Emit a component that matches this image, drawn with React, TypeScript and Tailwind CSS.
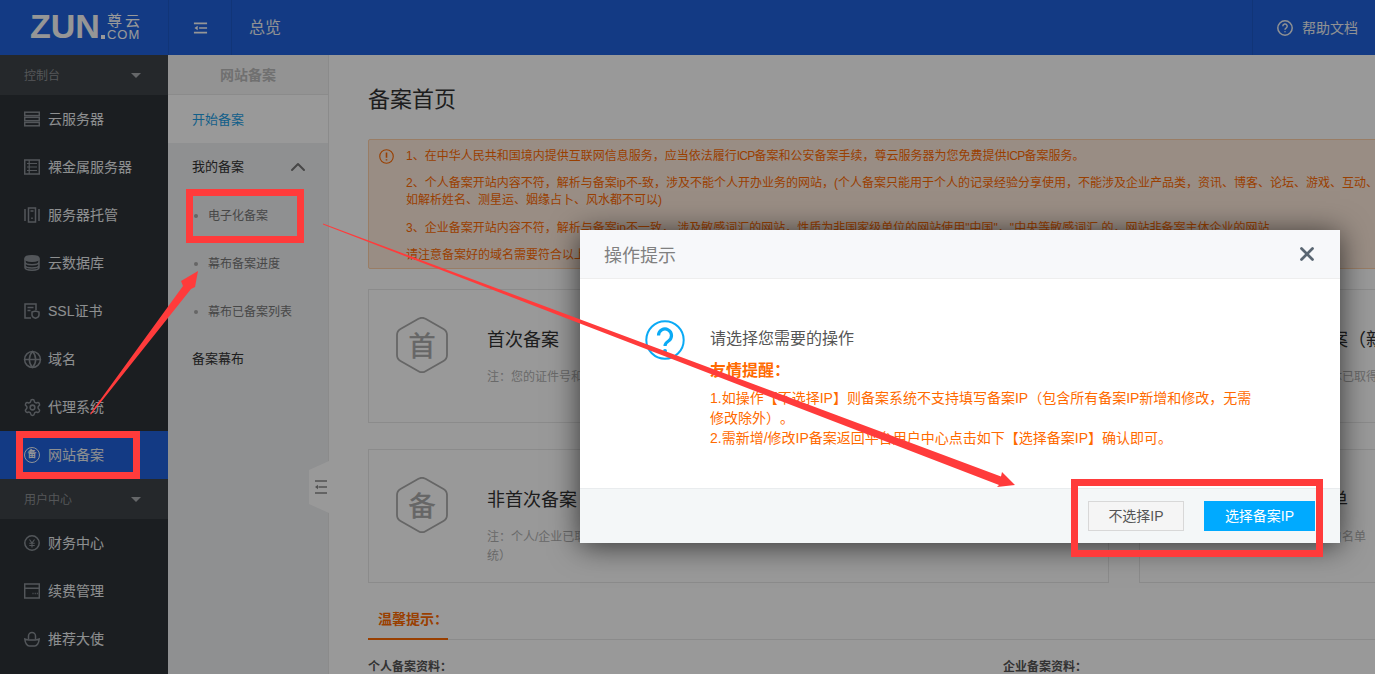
import React from "react";
import { Globe, Settings, X, ChevronUp } from "lucide-react";

const IC = "w-4 h-4 shrink-0 text-[#8a9096]";
const ICL = "w-[19px] h-[19px] -mx-[1.5px] shrink-0 text-[#8a9096]";

function Svg({ children }: { children: React.ReactNode }) {
  return (
    <svg viewBox="0 0 16 16" className={IC} fill="none" stroke="currentColor" strokeWidth="1.5">
      {children}
    </svg>
  );
}

const icons: Record<string, React.ReactNode> = {
  server: (
    <Svg>
      <rect x="0.7" y="1.2" width="14.6" height="3.4" />
      <rect x="0.7" y="6.3" width="14.6" height="3.4" />
      <rect x="0.7" y="11.4" width="14.6" height="3.4" />
    </Svg>
  ),
  metal: (
    <Svg>
      <rect x="0.7" y="1" width="14.6" height="14" />
      <path d="M3 4.5h10M3 8h10M3 11.5h10M5.2 1v14" strokeWidth="1.2" />
    </Svg>
  ),
  host: (
    <Svg>
      <rect x="4.5" y="1" width="7" height="14" />
      <path d="M1 2v12M15 2v12M6.5 4h3M8 10.5v1.5" />
    </Svg>
  ),
  db: (
    <Svg>
      <ellipse cx="8" cy="3.5" rx="7" ry="2.7" fill="currentColor" />
      <path d="M1 7c0 1.6 3 2.7 7 2.7s7-1.1 7-2.7M1 10.2c0 1.6 3 2.7 7 2.7s7-1.1 7-2.7M1 3.5v9c0 1.600 3 2.700 7 2.700s7-1.100 7-2.700v-9" />
    </Svg>
  ),
  ssl: (
    <Svg>
      <path d="M7 15H1V1h11v6" />
      <path d="M3.500 4.500h6M3.500 7.500h3" />
      <path d="M8 9l3.500-1 3.500 1v3c0 1.600-1.500 2.700-3.500 3.300C9.500 14.700 8 13.600 8 12z" />
    </Svg>
  ),
  yuan: (
    <Svg>
      <circle cx="8" cy="8" r="7.200" />
      <path d="M5.500 4.500L8 8l2.500-3.500M5.300 8.300h5.400M5.300 10.500h5.400M8 8v4.500" strokeWidth="1.100" />
    </Svg>
  ),
  renew: (
    <Svg>
      <rect x="0.700" y="1" width="14.600" height="14" />
      <path d="M1 5.300h14M8.500 10.500h1M10.700 10.500h1M12.800 10.500h1" />
    </Svg>
  ),
  ingot: (
    <Svg>
      <path d="M0.800 8c2 .7 3 1 4 1h6.400c1 0 2-.3 4-1-.3 4-2.300 7-4.500 7H5.300C3.100 15 1.100 12 .8 8z" />
      <path d="M4.500 8.500V5a3.500 3.500 0 0 1 7 0v3.500" />
    </Svg>
  ),
};

function Item({ icon, label, active }: { icon: React.ReactNode; label: string; active?: boolean }) {
  return (
    <div className={`h-12 flex items-center pl-6 gap-2 text-sm text-[#eceef0] ${active ? "bg-[#2062dc]" : ""}`}>
      {icon}
      <span>{label}</span>
    </div>
  );
}

function Group({ label }: { label: string }) {
  return (
    <div className="h-10 flex items-center justify-between pl-6 pr-[27px] bg-[#3e4348] text-xs text-[#8d9093]">
      <span className="pt-[2px]">{label}</span>
      <span className="w-0 h-0 border-x-[5px] border-x-transparent border-t-[5px] border-t-[#a8acb0]" />
    </div>
  );
}

function Hex({ ch }: { ch: string }) {
  return (
    <svg viewBox="0 0 52 56" className="w-[52px] h-[56px] shrink-0">
      <path
        d="M22.500 1.800a7 7 0 0 1 7 0L47.500 12a7 7 0 0 1 3.500 6v20a7 7 0 0 1-3.500 6L29.500 54.200a7 7 0 0 1-7 0L4.500 44A7 7 0 0 1 1 38V18a7 7 0 0 1 3.500-6z"
        fill="none"
        stroke="#aaaaaa"
        strokeWidth="1.800"
      />
      <text x="26" y="39" textAnchor="middle" fontSize="27" fill="#aaaaaa" stroke="#aaaaaa" strokeWidth="0.5">
        {ch}
      </text>
    </svg>
  );
}

function Card({ ch, title, note }: { ch: string; title: string; note: React.ReactNode }) {
  return (
    <div className="w-[741px] h-[134px] shrink-0 border border-[#e8e8e8] pl-[27px] pt-[27px] flex">
      <Hex ch={ch} />
      <div className="ml-[39px] pt-[10px] w-[600px]">
        <div className="text-lg leading-[26px] text-[#333333]">{title}</div>
        <div className="mt-[15px] text-xs leading-[19px] text-[#b0b0b0]">{note}</div>
      </div>
    </div>
  );
}

export default function App() {
  return (
    <div className="relative w-[1375px] h-[674px] overflow-hidden bg-white flex flex-col [text-spacing-trim:space-all] [font-family:'Liberation_Sans','Noto_Sans_CJK_SC',sans-serif]">
      {/* header */}
      <header className="h-[55px] shrink-0 bg-[#2062dc] flex items-stretch text-[#f0f2f5]">
        <div className="w-[169px] border-r border-[#1d59c8] flex items-center pl-[30px] text-white">
          <span className="text-[34px] leading-none font-bold mb-[4px] text-[#fbfbfb]">ZUN</span>
          <span className="ml-[1px] mt-[19px] w-[4px] h-[4px] bg-white" />
          <span className="ml-[2px] flex flex-col leading-none -mt-[1px]">
            <span className="text-[15px] leading-[16px] tracking-[3px] whitespace-nowrap">尊云</span>
            <span className="text-[13px] leading-[12px] tracking-[1px]">COM</span>
          </span>
        </div>
        <div className="w-[63px] border-r border-[#1d59c8] flex items-center justify-center">
          <svg viewBox="0 0 16 14" className="w-[15px] h-[14px]" fill="none" stroke="#fafafa" strokeWidth="1.800">
            <path d="M1 2h14M6.500 7H15M1 12h14" />
            <path d="M5 4.500L1.500 7 5 9.500z" fill="#fafafa" stroke="none" />
          </svg>
        </div>
        <div className="flex-1 flex items-center pl-[17px] text-base">总览</div>
        <div className="w-[123px] border-l border-[#1d59c8] flex items-center pl-6 gap-[9px] text-sm">
          <svg viewBox="0 0 16 16" className="w-4 h-4" fill="none" stroke="currentColor" strokeWidth="1.500">
            <circle cx="8" cy="8" r="7.200" />
            <path d="M5.800 6.200a2.200 2.200 0 1 1 3.300 1.900c-.7.400-1.100.8-1.100 1.600M8 11.200v1.100" />
          </svg>
          <span>帮助文档</span>
        </div>
      </header>

      <div className="flex-1 flex min-h-0">
        {/* sidebar */}
        <aside className="w-[168px] shrink-0 bg-[#2d3238]">
          <Group label="控制台" />
          <Item icon={icons.server} label="云服务器" />
          <Item icon={icons.metal} label="裸金属服务器" />
          <Item icon={icons.host} label="服务器托管" />
          <Item icon={icons.db} label="云数据库" />
          <Item icon={icons.ssl} label="SSL证书" />
          <Item icon={<Globe className={ICL} strokeWidth={1.9} />} label="域名" />
          <Item icon={<Settings className={ICL} strokeWidth={1.9} />} label="代理系统" />
          <Item
            active
            icon={
              <span className="w-4 h-4 shrink-0 rounded-full border-[1.5px] border-[#f0f3fa] text-[#f5f7fc] font-bold text-[9px] leading-[13px] text-center">
                备
              </span>
            }
            label="网站备案"
          />
          <Group label="用户中心" />
          <Item icon={icons.yuan} label="财务中心" />
          <Item icon={icons.renew} label="续费管理" />
          <Item icon={icons.ingot} label="推荐大使" />
        </aside>

        {/* sub nav */}
        <nav className="relative w-[161px] shrink-0 border-r border-[#e8e8e8] flex flex-col">
          <div className="h-10 shrink-0 border-b border-[#e8e8e8] bg-[#f5f5f5] flex items-center justify-center text-sm font-bold text-[#bbbbbb]">
            网站备案
          </div>
          <div className="h-12 shrink-0 flex items-center pl-6 pt-[2px] text-[13px] text-[#1e9fe6] bg-white">开始备案</div>
          <div className="flex-1 bg-[#eff0f2]">
            <div className="h-12 flex items-center justify-between pl-6 pr-[18px] text-[13px] text-[#333333]">
              <span>我的备案</span>
              <ChevronUp className="w-6 h-6 text-[#777777]" strokeWidth={2} />
            </div>
            {["电子化备案", "幕布备案进度", "幕布已备案列表"].map((t) => (
              <div key={t} className="h-12 flex items-center pl-[26px] pt-[2px] gap-[10px] text-xs text-[#777777]">
                <span className="w-[4px] h-[4px] rounded-full bg-[#aaaaaa]" />
                <span>{t}</span>
              </div>
            ))}
            <div className="h-12 flex items-center pl-6 text-[13px] text-[#333333]">备案幕布</div>
          </div>
          <svg viewBox="0 0 20 52" className="absolute -right-px top-[406px] w-5 h-[52px]">
            <path d="M20 0L0 9v34l20 9z" fill="#ffffff" />
            <path d="M6 20h12M9.500 26H18M6 32h12" stroke="#888888" strokeWidth="1.600" />
            <path d="M6 26l3-2.200v4.400z" fill="#888888" />
          </svg>
        </nav>

        {/* main */}
        <main className="flex-1 min-w-0 overflow-hidden pl-[39px] pt-[29px]">
          <h1 className="text-[22px] leading-8 font-normal text-[#333333]">备案首页</h1>
          <div className="mt-[23px] w-[1512px] h-[130px] border border-[#ffd0a8] bg-[#ffebdd] rounded-[2px] pl-[10px] pt-2 flex gap-3 text-xs leading-[17px] text-[#ff6a00]">
            <svg viewBox="0 0 16 16" className="w-[15px] h-[15px] shrink-0 mt-px" fill="none" stroke="#ff6a00" strokeWidth="1.200">
              <circle cx="8" cy="8" r="7.200" />
              <path d="M8 3.800v5.400M8 10.800v1.500" strokeWidth="1.700" />
            </svg>
            <div className="whitespace-nowrap">
              <p className="mb-[10px]">
                1、在中华人民共和国境内提供互联网信息服务，应当依法履行<span className="tracking-[-0.7px]">ICP</span>备案和公安备案手续，尊云服务器为您免费提供<span className="tracking-[-0.7px]">ICP</span>备案服务。
              </p>
              <p className="mb-[11px]">
                2、个人备案开站内容不符，解析与备案ip不-致，涉及不能个人开办业务的网站，(个人备案只能用于个人的记录经验分享使用，不能涉及企业产品类，资讯、博客、论坛、游戏、互动、
                <br />
                如解析姓名、测星运、姻缘占卜、风水都不可以)
              </p>
              <p className="mb-[10px]">3、企业备案开站内容不符，解析与备案ip不一致， 涉及敏感词汇的网站，性质为非国家级单位的网站使用"中国"，"中央等敏感词汇 的，网站非备案主体企业的网站</p>
              <p>请注意备案好的域名需要符合以上要求，否则将无法通过备案审核</p>
            </div>
          </div>

          <div className="mt-[20px] flex gap-[30px]">
            <Card ch="首" title="首次备案" note="注：您的证件号和域名此前从未办理过备案，请选择首次备案" />
            <Card ch="首" title="主体已备案（新增网站）" note="注：您企业主体已取得备案号" />
          </div>
          <div className="mt-[26px] flex gap-[30px]">
            <Card
              ch="备"
              title="非首次备案"
              note={
                <>
                  注：个人/企业已取得备案号需新增网站或域名，再次备案，需通过本系
                  <br />
                  统）
                </>
              }
            />
            <Card ch="备" title="域名白名单" note="注：添加域名白名单" />
          </div>

          <div className="mt-[16px] w-[1512px] border-b border-[#e8e8e8]">
            <div className="w-[80px] h-[41px] -mb-px border-b-2 border-[#ff6a00] pl-[10px] flex items-center text-sm font-bold text-[#ff6a00]">
              温馨提示：
            </div>
          </div>
          <div className="mt-[19px] flex text-xs font-bold text-[#555555]">
            <div className="w-[635px]">个人备案资料：</div>
            <div>企业备案资料：</div>
          </div>
        </main>
      </div>

      {/* dim overlay */}
      <div className="absolute inset-0 bg-black/40" />

      {/* modal */}
      <div className="absolute left-[580px] top-[230px] w-[760px] h-[313px] bg-white flex flex-col shadow-[0_3px_28px_rgba(0,0,0,0.65)]">
        <div className="h-[49px] shrink-0 bg-[#f7f8fa] border-b border-[#eeeeee] flex items-center justify-between pl-6 pr-[22px]">
          <span className="text-lg pt-[3px] text-[#808080]">操作提示</span>
          <X className="w-[22px] h-[22px] text-[#5a6672]" strokeWidth={3} />
        </div>
        <div className="flex-1 flex pl-[65px] pt-[41px]">
          <svg viewBox="0 0 40 40" className="w-10 h-10 shrink-0" fill="none">
            <circle cx="20" cy="20" r="18.700" stroke="#0aaaf5" strokeWidth="2" />
            <path d="M13.500 15.500a6.500 6.500 0 1 1 10 5.500c-2 1.300-3.500 2.500-3.500 5" stroke="#0aaaf5" strokeWidth="3.200" />
            <circle cx="20" cy="31" r="2" fill="#0aaaf5" />
          </svg>
          <div className="ml-[25px] w-[545px]">
            <div className="text-base leading-[20px] mt-[9px] text-[#555555]">请选择您需要的操作</div>
            <div className="mt-[12px] text-base leading-[20px] font-bold text-[#ff6a00]">友情提醒：</div>
            <div className="mt-[7px] text-sm leading-[20px] text-[#ff6a00]">
              1.如操作【不选择IP】则备案系统不支持填写备案IP（包含所有备案IP新增和修改，无需修改除外）。
              <br />
              2.需新增/修改IP备案返回平台用户中心点击如下【选择备案IP】确认即可。
            </div>
          </div>
        </div>
        <div className="h-[55px] shrink-0 bg-[#f4f7f8] border-t border-[#e9ecee] flex items-center justify-end gap-5 pr-[25px]">
          <button className="w-[96px] h-[30px] bg-[#f5f5f5] border border-[#d8d8d8] text-sm text-[#555555]">不选择IP</button>
          <button className="w-[111px] h-[30px] bg-[#00aaff] text-sm text-white">选择备案IP</button>
        </div>
      </div>

      {/* annotation marks */}
      <div className="absolute left-[16px] top-[431px] w-[124px] h-[48px] border-[7px] border-[#ff3b3b]" />
      <div className="absolute left-[186px] top-[189px] w-[118px] h-[54px] border-[7px] border-[#ff3b3b]" />
      <div className="absolute left-[1071px] top-[479px] w-[252px] h-[78px] border-[7px] border-[#ff3b3b]" />
      <svg className="absolute inset-0 w-[1375px] h-[674px] pointer-events-none" viewBox="0 0 1375 674">
        <polygon points="90,414 183,286 181,281 198,271 195,287 191,289 91,414.500" fill="#ff3b3b" />
        <polygon points="323,223.500 1001,476.500 1002,472 1015,485 997,487 999,485 323,224.500" fill="#ff3b3b" />
      </svg>
    </div>
  );
}
